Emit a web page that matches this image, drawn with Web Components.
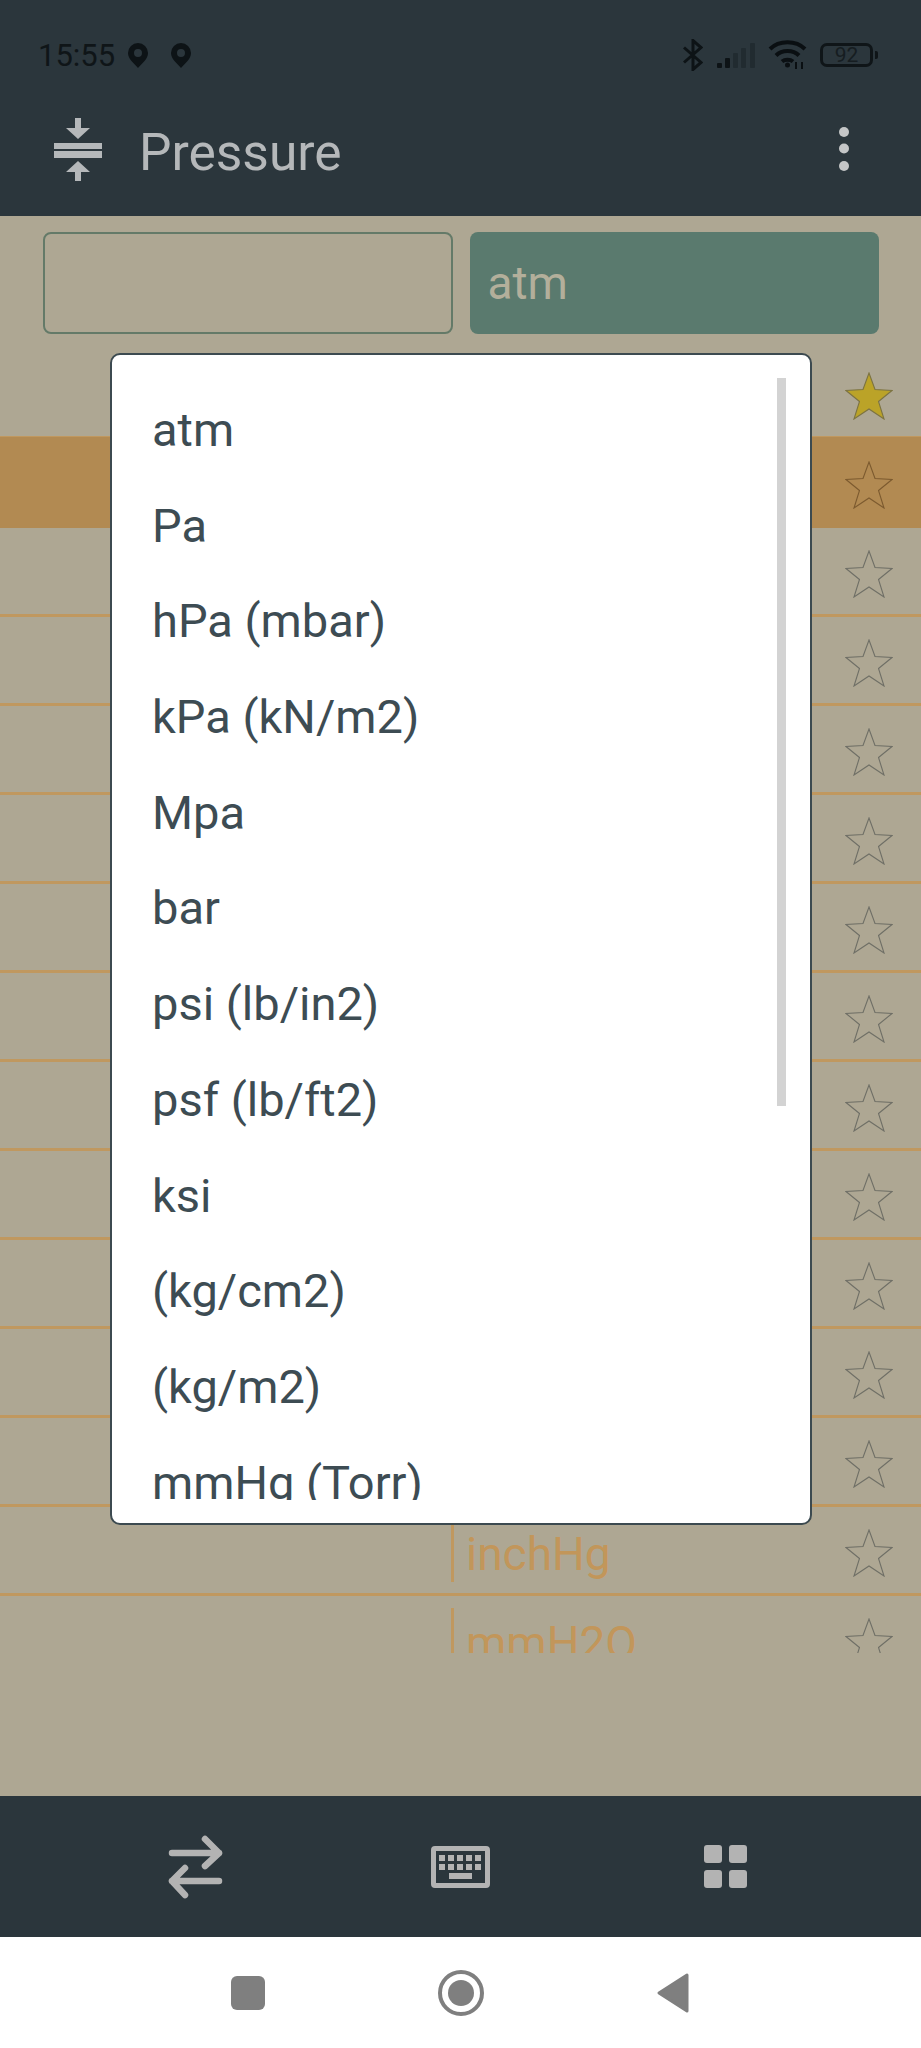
<!DOCTYPE html>
<html>
<head>
<meta charset="utf-8">
<title>Pressure</title>
<style>
    body{ margin: 0; background: #fff; }
</style>
</head>
<body>
<pressure-app>
    <status-bar slot="top" time="15:55" battery="92"></status-bar>
    <app-bar slot="top" title="Pressure"></app-bar>

    <unit-inputs slot="content" unit="atm"></unit-inputs>
    <unit-list slot="content">
        <unit-row starred></unit-row>
        <unit-row active></unit-row>
        <unit-row></unit-row>
        <unit-row></unit-row>
        <unit-row></unit-row>
        <unit-row></unit-row>
        <unit-row></unit-row>
        <unit-row></unit-row>
        <unit-row></unit-row>
        <unit-row></unit-row>
        <unit-row></unit-row>
        <unit-row></unit-row>
        <unit-row></unit-row>
        <unit-row>inchHg</unit-row>
        <unit-row>mmH2O</unit-row>
    </unit-list>

    <unit-picker slot="overlay">
        <picker-item>atm</picker-item>
        <picker-item>Pa</picker-item>
        <picker-item>hPa (mbar)</picker-item>
        <picker-item>kPa (kN/m2)</picker-item>
        <picker-item>Mpa</picker-item>
        <picker-item>bar</picker-item>
        <picker-item>psi (lb/in2)</picker-item>
        <picker-item>psf (lb/ft2)</picker-item>
        <picker-item>ksi</picker-item>
        <picker-item>(kg/cm2)</picker-item>
        <picker-item>(kg/m2)</picker-item>
        <picker-item>mmHg (Torr)</picker-item>
    </unit-picker>

    <action-bar slot="bottom"></action-bar>
    <system-nav slot="bottom"></system-nav>
</pressure-app>

<script>
const PIN = `<svg width="20" height="25" viewBox="0 0 20 25"><path fill="#0d1316" fill-rule="evenodd" d="M10 0a10 10 0 0 1 10 10c0 6-6 10.500-10 15C6 20.500 0 16 0 10A10 10 0 0 1 10 0zm0 6a4 4 0 1 0 0 8 4 4 0 0 0 0-8z"/></svg>`;

function define(name, markup, setup){
    const tpl = document.createElement('template');
    tpl.innerHTML = markup;
    customElements.define(name, class extends HTMLElement{
        constructor(){
            super();
            this.attachShadow({mode: 'open'});
            this.shadowRoot.appendChild(tpl.content.cloneNode(true));
        }
        connectedCallback(){
            if (setup) setup(this, this.shadowRoot);
        }
    });
}

define('pressure-app', `
    <style>
        :host{
            display: flex;
            flex-direction: column;
            width: 921px;
            height: 2048px;
            overflow: hidden;
            font-family: Roboto, "Liberation Sans", sans-serif;
        }
        #top{ background: #2b363c; height: 216px; }
        #content{ position: relative; flex: 1; min-height: 0; background: #aea793; }
    </style>
    <div id="top"><slot name="top"></slot></div>
    <div id="content">
        <slot name="content"></slot>
        <slot name="overlay"></slot>
    </div>
    <slot name="bottom"></slot>`);

define('status-bar', `
    <style>
        :host{
            display: flex;
            align-items: center;
            height: 110px;
            padding: 0 43px 0 38px;
            color: #0f1518;
        }
        #time{ font-size: 31px; width: 78px; margin-right: 12px; }
        #pin2{ margin-left: 23px; }
        svg{ display: block; }
        #right{ margin-left: auto; display: flex; align-items: center; }
        #battery{
            box-sizing: border-box;
            width: 53px;
            height: 24px;
            border: 3px solid #0f1518;
            border-radius: 7px;
            font-size: 21px;
            line-height: 18px;
            text-align: center;
            color: #161d21;
        }
        #nub{ width: 3px; height: 8px; margin-left: 2px; border-radius: 0 2px 2px 0; background: #0f1518; }
    </style>
    <span id="time"></span>
    ${PIN}
    <span id="pin2">${PIN}</span>
    <div id="right">
        <svg width="20" height="32" viewBox="0 0 20 32" fill="none" stroke="#0d1316" stroke-width="3"><path d="M1 8.500 18 23.500 10 30.500V1.500L18 8.500 1 23.500"/></svg>
        <svg width="40" height="25" viewBox="0 0 40 25" style="margin-left:13px">
            <rect x="1" y="20" width="5" height="5" rx="1" fill="#0d1316"/>
            <rect x="9" y="15" width="5" height="10" rx="1" fill="#0d1316"/>
            <rect x="17" y="10" width="5" height="15" rx="1" fill="#212b30"/>
            <rect x="25" y="5" width="5" height="20" rx="1" fill="#212b30"/>
            <rect x="34" y="0" width="5" height="25" rx="1" fill="#212b30"/>
        </svg>
        <svg width="39" height="30" viewBox="0 0 39 30" fill="none" stroke="#0a0f12" stroke-width="4" style="margin-left:12px">
            <path d="M2 9C11 0 28 0 37 9"/>
            <path d="M8 15.500C14 9.500 25 9.500 31 15.500"/>
            <path d="M14 21.500C17 19 22 19 25 21.500"/>
            <circle cx="19.500" cy="25" r="2.500" fill="#0a0f12" stroke="none"/>
            <path d="M28 22v7M34 22v7" stroke-width="2"/>
        </svg>
        <div id="battery" style="margin-left:13px"></div>
        <div id="nub"></div>
    </div>`, (el, root) => {
        root.querySelector('#time').textContent = el.getAttribute('time');
        root.querySelector('#battery').textContent = el.getAttribute('battery');
    });

define('app-bar', `
    <style>
        :host{
            display: flex;
            align-items: center;
            height: 78px;
            padding: 0 72px 0 54px;
        }
        svg{ display: block; flex: none; }
        #title{ font-size: 51.5px; color: #b5b8ba; margin-left: 37px; position: relative; top: 3px; }
        #dots{ margin-left: auto; }
    </style>
    <svg width="48" height="63" viewBox="0 0 48 63" fill="#b5b8ba">
        <path d="M21 0h6v10h9L24 21 12 10h9z"/>
        <rect y="25" width="48" height="6"/>
        <rect y="33" width="48" height="7"/>
        <path d="M24 43 36 54h-9v9h-6v-9h-9z"/>
    </svg>
    <span id="title"></span>
    <svg id="dots" width="10" height="44" viewBox="0 0 10 44" fill="#c4c6c7">
        <circle cx="5" cy="5" r="5"/><circle cx="5" cy="21.500" r="5"/><circle cx="5" cy="39" r="5"/>
    </svg>`, (el, root) => {
        root.querySelector('#title').textContent = el.getAttribute('title');
    });

define('unit-inputs', `
    <style>
        :host{
            display: grid;
            grid-template-columns: 1fr 1fr;
            gap: 17px;
            height: 102px;
            padding: 16px 42px 0 43px;
        }
        div{ box-sizing: border-box; border-radius: 8px; }
        #value{ border: 2px solid #647a68; }
        #unit{
            background: #5a7a6e;
            color: #b3af9b;
            font-size: 46px;
            line-height: 102px;
            padding-left: 18px;
        }
    </style>
    <div id="value"></div>
    <div id="unit"></div>`, (el, root) => {
        root.querySelector('#unit').textContent = el.getAttribute('unit');
    });

define('unit-list', `
    <style>
        :host{
            display: block;
            height: 1303px;
            margin-top: 16px;
            overflow: hidden;
        }
    </style>
    <slot></slot>`);

define('unit-row', `
    <style>
        :host{
            display: flex;
            box-sizing: border-box;
            height: 89px;
            padding-left: 451px;
            border-bottom: 3px solid #c0985f;
        }
        :host([active]){
            background: #b28a52;
            border-bottom-color: #b28a52;
            box-shadow: 0 -2px 0 #b28a52;
        }
        #unit{
            flex: 1;
            box-sizing: border-box;
            height: 63px;
            margin-top: 12px;
            border-left: 3px solid #c0985f;
            padding-left: 12px;
            font-size: 46px;
            line-height: 71px;
            color: #c2965a;
        }
        svg{ display: block; flex: none; margin: 22px 28px 0 0; }
        polygon{ fill: none; stroke: #6f6f66; stroke-width: 1.100; }
        :host([active]) polygon{ stroke: #7c5a2f; }
        :host([starred]) polygon{ fill: #bba328; stroke: #7c7342; }
    </style>
    <div id="unit"><slot></slot></div>
    <svg width="48" height="48" viewBox="0 0 48 48">
        <polygon points="24,1 30,17.500 47,18.500 33.500,29.500 39,47 24,37 9,47 14.500,29.500 1,18.500 18,17.500"/>
    </svg>`);

define('unit-picker', `
    <style>
        :host{
            position: absolute;
            left: 110px;
            top: 137px;
            box-sizing: border-box;
            width: 702px;
            height: 1172px;
            padding: 23px 0;
            background: #fff;
            border: 2px solid #3c4a50;
            border-radius: 10px;
        }
        #scroller{ height: 100%; overflow: hidden; }
        #thumb{
            position: absolute;
            left: 665px;
            top: 23px;
            width: 9px;
            height: 728px;
            background: #d3d3d3;
        }
    </style>
    <div id="scroller"><slot></slot></div>
    <div id="thumb"></div>`);

define('picker-item', `
    <style>
        :host{
            display: block;
            height: 95.7px;
            line-height: 103px;
            padding-left: 40px;
            font-size: 47px;
            color: #3d4c53;
            white-space: nowrap;
        }
    </style>
    <slot></slot>`);

define('action-bar', `
    <style>
        :host{
            display: grid;
            grid-template-columns: repeat(3, 1fr);
            align-items: center;
            justify-items: center;
            height: 141px;
            padding: 0 62px;
            background: #2b363c;
        }
        svg{ display: block; }
    </style>
    <svg width="62" height="68" viewBox="0 0 62 68" fill="none" stroke="#b3b3b3" stroke-width="6.500" stroke-linecap="round" stroke-linejoin="round">
        <path d="M8 20H55M41 6 55 20 41 33"/>
        <path d="M55 48H8M21 35 8 48 21 62"/>
    </svg>
    <svg width="59" height="42" viewBox="0 0 59 42" fill="#b3b3b3">
        <path fill-rule="evenodd" d="M4 0H55a4 4 0 0 1 4 4V38a4 4 0 0 1-4 4H4a4 4 0 0 1-4-4V4a4 4 0 0 1 4-4zM5 5V37H54V5z"/>
        <rect x="8" y="9" width="6" height="6"/><rect x="17" y="9" width="6" height="6"/><rect x="26" y="9" width="6" height="6"/><rect x="35" y="9" width="6" height="6"/><rect x="44" y="9" width="6" height="6"/>
        <rect x="8" y="18" width="6" height="6"/><rect x="17" y="18" width="6" height="6"/><rect x="26" y="18" width="6" height="6"/><rect x="35" y="18" width="6" height="6"/><rect x="44" y="18" width="6" height="6"/>
        <rect x="18" y="27" width="23" height="6"/>
    </svg>
    <svg width="43" height="43" viewBox="0 0 43 43" fill="#b3b3b3" style="margin-right:1px">
        <rect width="18" height="18" rx="3"/><rect x="25" width="18" height="18" rx="3"/>
        <rect y="25" width="18" height="18" rx="3"/><rect x="25" y="25" width="18" height="18" rx="3"/>
    </svg>`);

define('system-nav', `
    <style>
        :host{
            display: grid;
            grid-template-columns: repeat(3, 1fr);
            align-items: center;
            justify-items: center;
            height: 111px;
            padding: 0 141px;
            background: #fff;
        }
        svg{ display: block; }
    </style>
    <svg width="34" height="34" viewBox="0 0 34 34"><rect width="34" height="34" rx="6" fill="#7f7f7f"/></svg>
    <svg width="46" height="46" viewBox="0 0 46 46"><circle cx="23" cy="23" r="21" fill="none" stroke="#7f7f7f" stroke-width="4"/><circle cx="23" cy="23" r="13" fill="#7f7f7f"/></svg>
    <svg width="32" height="40" viewBox="0 0 32 40" style="margin-right:2px"><path d="M30 2V38L2 20z" fill="#7f7f7f" stroke="#7f7f7f" stroke-width="3" stroke-linejoin="round"/></svg>`);
</script>
</body>
</html>
